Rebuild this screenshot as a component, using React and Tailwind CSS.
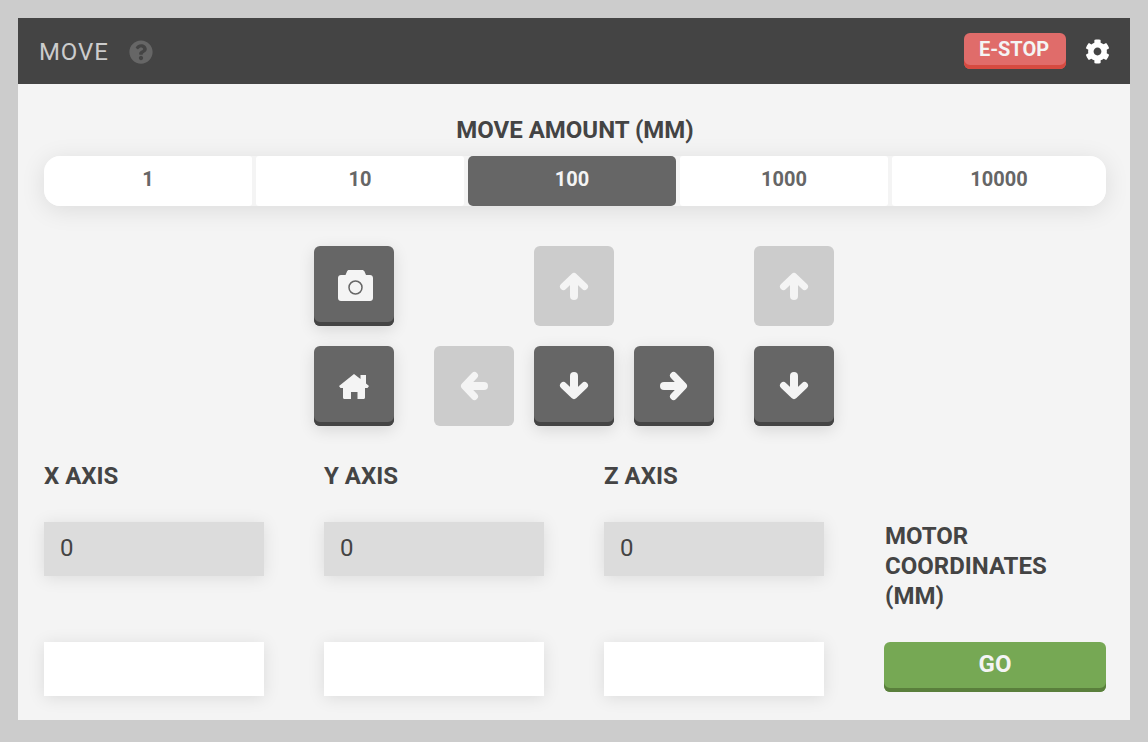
import React from "react";
import { FaQuestionCircle, FaCog } from "react-icons/fa";

function Seg({ children, active, className }) {
  return (
    <button className={`h-[50px] flex items-center justify-center pb-[4px] text-[20px] font-bold ${active ? "bg-[#666666] text-[#f4f4f4] rounded-[5px]" : "bg-white text-[#666666]"} ${className || ""}`}>
      {children}
    </button>
  );
}

function Key({ children, disabled }) {
  return (
    <button className={`w-20 h-20 rounded-[6px] flex items-center justify-center ${disabled ? "bg-[#cccccc]" : "bg-[#666666] shadow-[inset_0_-4px_0_#444444,0_4px_16px_rgba(0,0,0,0.12)]"}`}>
      {children}
    </button>
  );
}

function Field({ value, filled }) {
  return (
    <div className={`w-[220px] h-[54px] flex items-center pl-4 pb-[3px] text-[24px] text-[#444444] shadow-[0_2px_16px_rgba(0,0,0,0.1)] ${filled ? "bg-[#dcdcdc]" : "bg-white"}`}>
      {value}
    </div>
  );
}

function Arrow({ rotate }) {
  const cls = rotate === 90 ? "rotate-90" : rotate === 180 ? "rotate-180" : rotate === 270 ? "-rotate-90" : "";
  return (
    <svg width="30" height="30" viewBox="0 0 30 30" fill="none" stroke="#f4f4f4" strokeLinecap="round" strokeLinejoin="round" className={cls}>
      <path strokeWidth="8" d="M15 25V10" />
      <path strokeWidth="7" d="M4.500 15.500 15 5.500l10.500 10" />
    </svg>
  );
}

function CameraIcon() {
  return (
    <svg width="35" height="31" viewBox="0 0 35 31" className="ml-[3px] mb-px">
      <path fill="#f4f4f4" d="M11 0h13c1 0 2 .5 2.500 1.500L28 5h4c1.700 0 3 1.300 3 3v20c0 1.700-1.300 3-3 3H3c-1.700 0-3-1.300-3-3V8c0-1.700 1.300-3 3-3h4.500L9 1.500C9.500.5 10 0 11 0z" />
      <circle cx="17.500" cy="17.500" r="6.500" fill="none" stroke="#666666" strokeWidth="1.500" />
    </svg>
  );
}

function HomeIcon() {
  return (
    <svg width="30" height="25" viewBox="0 0 30 25">
      <path fill="#f4f4f4" d="M15 0l6.500 5V1H27v8.500l3 2.500-1.500 2H26v9.500c0 .9-.6 1.500-1.500 1.500h-6v-7H12v7H5.500c-.9 0-1.500-.6-1.500-1.500V14H1.500L0 12z" />
    </svg>
  );
}

export default function App() {
  return (
    <div className="w-[1148px] h-[742px] bg-[#cccccc] p-[18px] pb-[22px] font-['Roboto',sans-serif]">
      <div className="h-[702px] bg-[#f4f4f4] flex flex-col">
        <div className="h-[66px] bg-[#444444] flex items-center justify-between pl-[21px] pr-[20px]">
          <div className="flex items-center gap-[20px] pt-[2px]">
            <span className="text-[24px] font-normal text-[#cccccc] tracking-[0.9px]">MOVE</span>
            <FaQuestionCircle size={24} className="text-[#666666]" />
          </div>
          <div className="flex items-center gap-[19px]">
            <button className="w-[102px] h-[36px] rounded-[6px] bg-[#e06c6a] shadow-[inset_0_-4px_0_#d64a40] text-[#f4f4f4] font-bold text-[20px] flex items-center justify-center pb-[5px] pr-[2px]">E-STOP</button>
            <FaCog size={25} className="text-white" />
          </div>
        </div>

        <div className="flex-1 pl-[26px] pr-[24px] pt-[31px]">
          <div className="text-center text-[24px] leading-[30px] font-bold text-[#444444]">MOVE AMOUNT (MM)</div>

          <div className="mt-[11px] flex gap-[4px] rounded-[16px] shadow-[0_4px_24px_rgba(0,0,0,0.1)]">
            <Seg className="w-[208px] rounded-l-[16px] rounded-r-[3px]">1</Seg>
            <Seg className="w-[208px] rounded-[3px]">10</Seg>
            <Seg className="w-[208px]" active>100</Seg>
            <Seg className="w-[208px] rounded-[3px]">1000</Seg>
            <Seg className="w-[214px] rounded-r-[16px] rounded-l-[3px]">10000</Seg>
          </div>

          <div className="mt-[40px] pr-[2px] flex justify-center gap-[40px]">
            <div className="flex flex-col gap-[20px]">
              <Key><CameraIcon /></Key>
              <Key><HomeIcon /></Key>
            </div>
            <div className="grid grid-cols-[80px_80px_80px] gap-[20px]">
              <div />
              <Key disabled><Arrow /></Key>
              <div />
              <Key disabled><Arrow rotate={270} /></Key>
              <Key><Arrow rotate={180} /></Key>
              <Key><Arrow rotate={90} /></Key>
            </div>
            <div className="flex flex-col gap-[20px]">
              <Key disabled><Arrow /></Key>
              <Key><Arrow rotate={180} /></Key>
            </div>
          </div>

          <div className="mt-[35px] grid grid-cols-[220px_220px_220px_222px] gap-x-[60px] text-[#444444]">
            <div className="text-[24px] leading-[30px] font-bold">X AXIS</div>
            <div className="text-[24px] leading-[30px] font-bold">Y AXIS</div>
            <div className="text-[24px] leading-[30px] font-bold">Z AXIS</div>
            <div />

            <div className="mt-[31px]"><Field value="0" filled /></div>
            <div className="mt-[31px]"><Field value="0" filled /></div>
            <div className="mt-[31px]"><Field value="0" filled /></div>
            <div className="mt-[30px] pl-px text-[24px] leading-[30px] font-bold h-[91px]">MOTOR COORDINATES (MM)</div>

            <div className="mt-[30px]"><Field /></div>
            <div className="mt-[30px]"><Field /></div>
            <div className="mt-[30px]"><Field /></div>
            <div className="mt-[30px]">
              <button className="w-[222px] h-[50px] rounded-[6px] bg-[#76a854] shadow-[inset_0_-4px_0_#5a7f3c] text-[#f4f4f4] font-bold text-[24px] flex items-center justify-center pb-[6px]">GO</button>
            </div>
          </div>
        </div>
      </div>
    </div>
  );
}
